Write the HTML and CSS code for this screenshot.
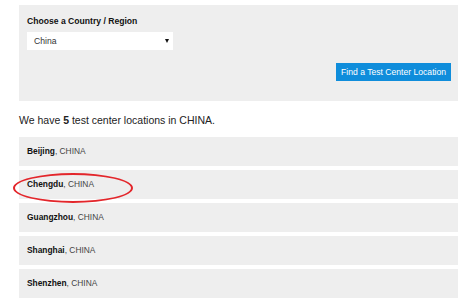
FILE: index.html
```html
<!DOCTYPE html>
<html lang="en">
<head>
    <meta charset="UTF-8">
    <title>Find a Test Center</title>
    <link rel="stylesheet" href="styles.css">
</head>
<body>
    <div class="finder">
        <label class="finder-label">Choose a Country / Region</label>
        <div class="select">
            <span>China</span>
            <span class="caret"></span>
        </div>
        <div class="finder-actions">
            <a href="#" class="button">Find a Test Center Location</a>
        </div>
    </div>

    <p class="summary">We have <strong>5</strong> test center locations in CHINA.</p>

    <ul class="locations">
        <li><strong>Beijing</strong>, CHINA</li>
        <li class="marked"><strong>Chengdu</strong>, CHINA<span class="circle"></span></li>
        <li><strong>Guangzhou</strong>, CHINA</li>
        <li><strong>Shanghai</strong>, CHINA</li>
        <li><strong>Shenzhen</strong>, CHINA</li>
    </ul>
</body>
</html>
```

FILE: styles.css
```css
body {
    margin: 0;
    padding: 5px 14px 0 19px;
    font-family: 'Liberation Sans', Arial, sans-serif;
    color: #222;
    background: white;
}
.finder {
    background: #eeeeee;
    padding: 10px 7px 20px 8px;
}
.finder-label {
    display: block;
    font-size: 8.6px;
    font-weight: bold;
    line-height: 12px;
    color: #111;
}
.select {
    display: flex;
    align-items: center;
    justify-content: space-between;
    width: 146px;
    height: 18px;
    margin-top: 5px;
    padding: 0 4px 0 7px;
    box-sizing: border-box;
    background: white;
    font-size: 8.6px;
    color: #333;
}
.caret {
    width: 0;
    height: 0;
    border-left: 2px solid transparent;
    border-right: 2px solid transparent;
    border-top: 4px solid #111;
}
.finder-actions {
    display: flex;
    justify-content: flex-end;
    margin-top: 13px;
}
.button {
    display: inline-block;
    height: 18px;
    line-height: 18px;
    padding: 0 5px;
    background: #0f8ddb;
    color: white;
    font-size: 8.6px;
    text-decoration: none;
}
.summary {
    margin: 12px 0 10px;
    font-size: 10.5px;
    line-height: 14px;
    color: #222;
}
.locations {
    list-style: none;
    margin: 0;
    padding: 0;
}
.locations li {
    position: relative;
    height: 29px;
    line-height: 29px;
    margin-bottom: 4px;
    padding-left: 8px;
    background: #eeeeee;
    font-size: 8.4px;
    color: #444;
}
.locations li strong {
    color: #111;
}
.circle {
    position: absolute;
    left: -6px;
    top: 3px;
    width: 116px;
    height: 26px;
    border: 2px solid #e3262b;
    border-radius: 50%;
}
```
